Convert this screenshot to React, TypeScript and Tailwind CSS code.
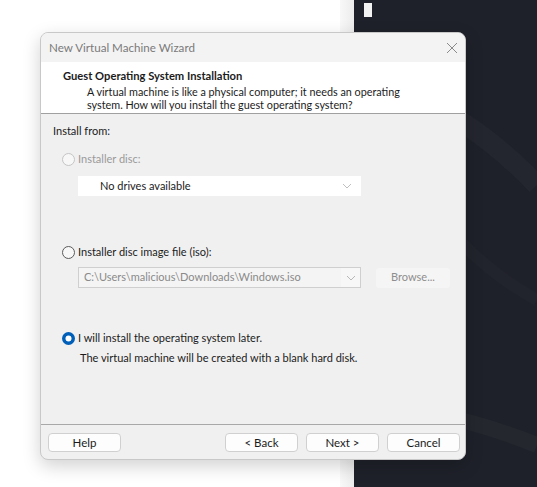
import React from "react";

function Radio({ checked, disabled }: { checked?: boolean; disabled?: boolean }) {
  if (checked) {
    return (
      <svg width="13" height="13" viewBox="0 0 13 13" className="shrink-0">
        <circle cx="6.5" cy="6.5" r="6.5" fill="#005fb8" />
        <circle cx="6.5" cy="6.5" r="3" fill="#ffffff" />
      </svg>
    );
  }
  return (
    <svg width="13" height="13" viewBox="0 0 13 13" className="shrink-0">
      <circle cx="6.5" cy="6.5" r="6" fill="#f7f7f7" stroke={disabled ? "#c4c4c4" : "#5a5a5a"} strokeWidth="1" />
    </svg>
  );
}

function Chevron({ color }: { color: string }) {
  return (
    <svg width="10" height="6" viewBox="0 0 10 6">
      <path d="M1 1 L5 5 L9 1" fill="none" stroke={color} strokeWidth="0.9" />
    </svg>
  );
}

function Btn({ label, className = "" }: { label: string; className?: string }) {
  return (
    <div
      className={
        "flex h-[19px] w-[73px] items-center justify-center rounded-[4px] border border-[#d0d0d0] bg-[#fdfdfd] text-[11.5px] text-[#1b1b1b] " +
        className
      }
    >
      {label}
    </div>
  );
}

export default function App() {
  const font = { fontFamily: 'Lato, "Noto Sans", sans-serif' };
  return (
    <div className="relative flex h-[487px] w-[537px] overflow-hidden" style={font}>
      <div className="h-full w-[340px] bg-white" />
      <div className="h-full w-[14px] bg-gradient-to-r from-[#f8f8f8] to-[#ececec]" />
      <div className="relative h-full flex-1 bg-[#1f212a]">
        <div className="absolute left-[10px] top-[3px] h-[14px] w-[8px] bg-[#f2f2f2]" />
        <svg className="absolute inset-0" width="183" height="487" viewBox="0 0 183 487">
          <path d="M10 80 C 80 95, 140 140, 183 185" fill="none" stroke="#24262f" strokeWidth="20" />
          <path d="M40 160 C 80 210, 110 260, 183 300" fill="none" stroke="#22242d" strokeWidth="12" />
          <path d="M0 412 C 60 405, 120 420, 183 445" fill="none" stroke="#25272f" strokeWidth="16" />
        </svg>
      </div>

      {/* dialog window */}
      <div className="absolute left-[40px] top-[32px] flex h-[428px] w-[426px] flex-col overflow-hidden rounded-[8px] border border-[#c8c8c8] bg-[#f0f0f0] shadow-[0_6px_18px_rgba(0,0,0,0.18)]">
        {/* title bar */}
        <div className="flex h-[29px] shrink-0 items-center justify-between bg-[#f3f3f3] pl-[8px] pr-[6px]">
          <span className="text-[11.6px] text-[#7a7a7a]">New Virtual Machine Wizard</span>
          <svg width="12" height="12" viewBox="0 0 12 12" className="mr-[1px]">
            <path d="M1 1 L11 11 M11 1 L1 11" stroke="#8a8a8a" strokeWidth="1" />
          </svg>
        </div>
        {/* header */}
        <div className="flex h-[52px] shrink-0 flex-col border-b border-[#a0a0a0] bg-white pl-[22px] pt-[7px] text-[10.8px] leading-[13px] text-[#1b1b1b]">
          <span className="text-[11.2px] font-bold">Guest Operating System Installation</span>
          <span className="mt-[3px] pl-[24px]">A virtual machine is like a physical computer; it needs an operating</span>
          <span className="pl-[24px]">system. How will you install the guest operating system?</span>
        </div>
        {/* body */}
        <div className="flex flex-1 flex-col pl-[12px] text-[11px] text-[#1b1b1b]">
          <span className="mt-[10px] leading-[14px]">Install from:</span>
          <div className="mt-[14px] flex items-center gap-[3px] pl-[9px] text-[#9a9a9a]">
            <Radio disabled />
            <span className="leading-[14px]">Installer disc:</span>
          </div>
          <div className="ml-[25px] mt-[10px] flex h-[20px] w-[283px] items-center justify-between bg-white pl-[22px] pr-[9px]">
            <span className="text-[#1b1b1b]">No drives available</span>
            <Chevron color="#b8b8b8" />
          </div>
          <div className="mt-[49px] flex items-center gap-[3px] pl-[9px]">
            <Radio />
            <span className="leading-[14px]">Installer disc image file (iso):</span>
          </div>
          <div className="ml-[25px] mt-[8px] flex items-center">
            <div className="flex h-[21px] w-[283px] items-center border border-[#cfcfcf] bg-[#f4f4f4]">
              <span className="flex-1 pl-[5px] text-[#8a8a8a]">C:\Users\malicious\Downloads\Windows.iso</span>
              <div className="flex h-full w-[19px] items-center justify-center bg-[#f7f7f7]">
                <Chevron color="#b0b0b0" />
              </div>
            </div>
            <div className="ml-[15px] flex h-[20px] w-[74px] items-center justify-center rounded-[3px] bg-[#f5f5f5] text-[#8e8e8e]">
              Browse...
            </div>
          </div>
          <div className="mt-[43px] flex items-center gap-[3px] pl-[9px]">
            <Radio checked />
            <span className="leading-[14px]">I will install the operating system later.</span>
          </div>
          <span className="mt-[6px] pl-[27px] leading-[14px]">The virtual machine will be created with a blank hard disk.</span>
        </div>
        {/* footer */}
        <div className="flex h-[35px] shrink-0 items-start border-t border-[#a8a8a8] pl-[7px] pr-[5px] pt-[8px]">
          <Btn label="Help" />
          <div className="flex-1" />
          <Btn label="< Back" />
          <Btn label="Next >" className="ml-[8px]" />
          <Btn label="Cancel" className="ml-[8px]" />
        </div>
      </div>
    </div>
  );
}
